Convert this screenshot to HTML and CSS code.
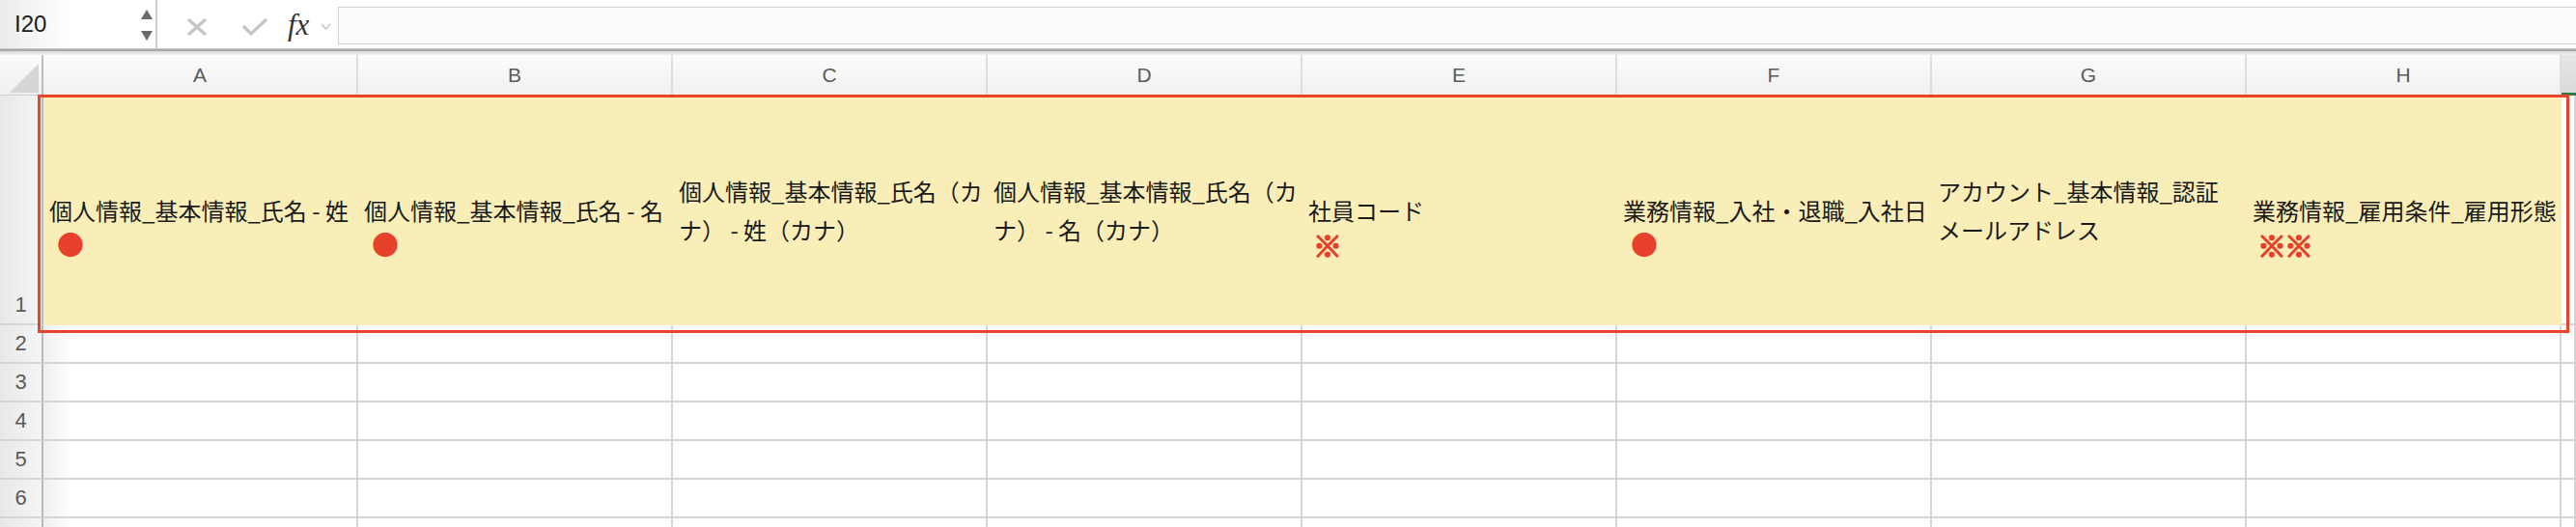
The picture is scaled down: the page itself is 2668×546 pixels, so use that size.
FILE: index.html
```html
<!DOCTYPE html>
<html lang="ja">
<head>
    <meta charset="UTF-8">
    <title>Sheet1</title>
    <link rel="stylesheet" href="styles.css">
</head>
<body>

<div class="formula-bar">
    <div class="name-box">
        <span class="cell-ref">I20</span>
        <svg class="spinner" width="12" height="32" viewBox="0 0 12 32">
            <polygon points="0,10 6,0 12,10" fill="#6b6b6b"/>
            <polygon points="0,22 12,22 6,32" fill="#6b6b6b"/>
        </svg>
    </div>
    <div class="bar-buttons">
        <svg class="btn-cancel" width="22" height="18" viewBox="0 0 22 18">
            <path d="M2 1 L20 17 M20 1 L2 17" stroke="#c6c6c6" stroke-width="3.4" fill="none"/>
        </svg>
        <svg class="btn-enter" width="28" height="20" viewBox="0 0 28 20">
            <polyline points="2,9 10,17 26,2" stroke="#c6c6c6" stroke-width="3.4" fill="none"/>
        </svg>
        <span class="fx">fx</span>
        <svg class="btn-more" width="11" height="8" viewBox="0 0 11 8">
            <polyline points="1,1 5.5,6 10,1" stroke="#c9c9c9" stroke-width="1.8" fill="none"/>
        </svg>
    </div>
    <div class="formula-input"></div>
</div>
<div class="bar-edge"></div>

<div class="sheet" id="sheet">
    <div class="corner">
        <svg width="30" height="30" viewBox="0 0 30 30"><polygon points="0,30 30,30 30,0" fill="#d6d6d6"/></svg>
    </div>
    <div class="col-head">A</div>
    <div class="col-head">B</div>
    <div class="col-head">C</div>
    <div class="col-head">D</div>
    <div class="col-head">E</div>
    <div class="col-head">F</div>
    <div class="col-head">G</div>
    <div class="col-head">H</div>
    <div class="col-head current"></div>

    <div class="row-head">1</div>
    <div class="cell field marked">
        <span class="label">個人情報_基本情報_氏名 - 姓</span>
        <span class="mark">●</span>
    </div>
    <div class="cell field marked">
        <span class="label">個人情報_基本情報_氏名 - 名</span>
        <span class="mark">●</span>
    </div>
    <div class="cell field">
        <span class="label">個人情報_基本情報_氏名（カ</span>
        <span class="label">ナ） - 姓（カナ）</span>
    </div>
    <div class="cell field">
        <span class="label">個人情報_基本情報_氏名（カ</span>
        <span class="label">ナ） - 名（カナ）</span>
    </div>
    <div class="cell field marked">
        <span class="label">社員コード</span>
        <span class="mark ref">※</span>
    </div>
    <div class="cell field marked">
        <span class="label">業務情報_入社・退職_入社日</span>
        <span class="mark">●</span>
    </div>
    <div class="cell field">
        <span class="label">アカウント_基本情報_認証</span>
        <span class="label">メールアドレス</span>
    </div>
    <div class="cell field marked">
        <span class="label">業務情報_雇用条件_雇用形態</span>
        <span class="mark ref">※※</span>
    </div>
    <div class="cell"></div>

    <div class="selection-frame"></div>
</div>

<script>
    // empty rows below the header row; the last one is only partly on screen
    const sheet = document.getElementById('sheet');
    for (let r = 2; r <= 7; r++) {
        let html = `<div class="row-head">${r < 7 ? r : ''}</div>`;
        for (let c = 0; c < 9; c++) {
            html += `<div class="cell${c === 0 ? ' first' : ''}"></div>`;
        }
        sheet.insertAdjacentHTML('beforeend', html);
    }
</script>

</body>
</html>
```

FILE: styles.css
```css
body {
    margin: 0;
    width: 2668px;
    height: 546px;
    overflow: hidden;
    background-color: #fff;
    font-family: "Liberation Sans", Arial, sans-serif;
}
.formula-bar {
    display: flex;
    align-items: center;
    height: 51px;
    box-sizing: border-box;
    border-bottom: 1px solid #c6c6c6;
    background-color: #fff;
}
.name-box {
    width: 163px;
    height: 100%;
    box-sizing: border-box;
    border-right: 2px solid #cdcdcd;
    display: flex;
    align-items: center;
    justify-content: space-between;
    padding: 0 3px 0 15px;
    background: linear-gradient(to right, #ececec, #fff 45%);
}
.cell-ref {
    font-size: 24px;
    color: #1c1c1c;
}
.spinner {
    margin-top: 1px;
}
.bar-buttons {
    display: flex;
    align-items: center;
    height: 100%;
    padding: 5px 0 0 30px;
    box-sizing: border-box;
}
.btn-enter {
    margin-left: 35px;
}
.fx {
    margin-left: 20px;
    font-family: "Liberation Serif", "Times New Roman", serif;
    font-style: italic;
    font-size: 31px;
    color: #333;
    line-height: 30px;
    margin-top: -4px;
}
.btn-more {
    margin-left: 12px;
}
.formula-input {
    flex: 1;
    height: 39px;
    margin: 3px 0 0 7px;
    box-sizing: border-box;
    border: 1px solid #d2d2d2;
    border-right: none;
    background-color: #fcfcfc;
}
.bar-edge {
    height: 4px;
    border-top: 2px solid #a9a9a9;
    background: linear-gradient(#dadada, #f0f0f0);
}
.sheet {
    position: relative;
    display: grid;
    grid-template-columns: 45px repeat(8, 326px) 1fr;
    grid-template-rows: 42px 238px;
    grid-auto-rows: 40px;
}
.corner {
    box-sizing: border-box;
    padding: 9px 0 0 10px;
    border-right: 2px solid #bdbdbd;
    border-bottom: 1px solid #cfcfcf;
    background: linear-gradient(#fbfbfb, #efefef);
}
.corner svg {
    display: block;
}
.col-head {
    display: flex;
    align-items: center;
    justify-content: center;
    box-sizing: border-box;
    border-right: 2px solid #dedede;
    border-bottom: 1px solid #cfcfcf;
    background: linear-gradient(#fcfcfc, #f0f0f0);
    font-size: 21px;
    color: #5b5b5b;
}
.col-head.current {
    border-right: none;
    border-bottom: 3px solid #2f7a4b;
    background: linear-gradient(#e6e6e6, #d9d9d9);
}
.row-head {
    display: flex;
    align-items: flex-end;
    justify-content: center;
    box-sizing: border-box;
    border-right: 2px solid #b9b9b9;
    border-bottom: 2px solid #d6d6d6;
    background: linear-gradient(to right, #e8e8e8, #f5f5f5);
    font-size: 22px;
    line-height: 38px;
    color: #5b5b5b;
}
.cell {
    box-sizing: border-box;
    border-right: 2px solid #d6d6d6;
    border-bottom: 2px solid #d6d6d6;
    background-color: #fff;
}
.cell.first {
    background: linear-gradient(to right, #efefef, #fff 28px);
}
.cell.field {
    display: flex;
    flex-direction: column;
    justify-content: center;
    padding-left: 6px;
    border: none;
    background-color: #f9eeb7;
    font-family: "Noto Sans CJK JP", sans-serif;
    font-size: 24px;
    line-height: 40px;
    color: #1a1a1a;
    white-space: nowrap;
}
.cell.field.marked {
    padding-top: 30px;
}
.mark {
    padding-left: 8px;
    font-size: 28px;
    line-height: 30px;
    color: #e8412b;
}
.mark.ref {
    padding-left: 5px;
    font-size: 30px;
    font-weight: 700;
    letter-spacing: -2px;
    -webkit-text-stroke: 1.6px #e8412b;
}
.selection-frame {
    position: absolute;
    left: 39px;
    top: 41px;
    width: 2622px;
    height: 247px;
    box-sizing: border-box;
    border: 3px solid #e8432b;
    pointer-events: none;
}
```
